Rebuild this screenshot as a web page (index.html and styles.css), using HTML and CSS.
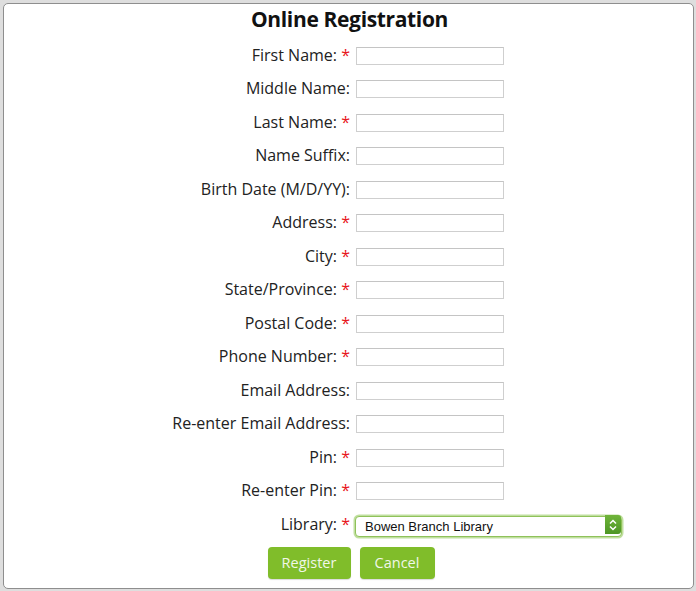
FILE: index.html
```html
<!DOCTYPE html>
<html lang="en">
<head>
<meta charset="utf-8">
<title>Online Registration</title>
<link rel="stylesheet" href="styles.css">
</head>
<body>
<div class="panel">
  <h1 class="title">Online Registration</h1>
  <form class="form">
    <label class="lbl">First Name: <span class="req">*</span></label><input class="field" type="text">
    <label class="lbl">Middle Name:</label><input class="field" type="text">
    <label class="lbl">Last Name: <span class="req">*</span></label><input class="field" type="text">
    <label class="lbl">Name Suffix:</label><input class="field" type="text">
    <label class="lbl">Birth Date (M/D/YY):</label><input class="field" type="text">
    <label class="lbl">Address: <span class="req">*</span></label><input class="field" type="text">
    <label class="lbl">City: <span class="req">*</span></label><input class="field" type="text">
    <label class="lbl">State/Province: <span class="req">*</span></label><input class="field" type="text">
    <label class="lbl">Postal Code: <span class="req">*</span></label><input class="field" type="text">
    <label class="lbl">Phone Number: <span class="req">*</span></label><input class="field" type="text">
    <label class="lbl">Email Address:</label><input class="field" type="text">
    <label class="lbl">Re-enter Email Address:</label><input class="field" type="text">
    <label class="lbl">Pin: <span class="req">*</span></label><input class="field" type="password">
    <label class="lbl">Re-enter Pin: <span class="req">*</span></label><input class="field" type="password">
    <label class="lbl">Library: <span class="req">*</span></label>
    <div class="select-wrap">
      <select class="select">
        <option>Bowen Branch Library</option>
      </select>
      <span class="arrow">
        <svg width="8" height="12" viewBox="0 0 8 12"><path d="M1 4.5 L4 1.5 L7 4.5 M1 7.5 L4 10.5 L7 7.5" fill="none" stroke="#fff" stroke-width="1.5"/></svg>
      </span>
    </div>
    <div class="actions">
      <button type="button" class="btn btn-register">Register</button>
      <button type="button" class="btn btn-cancel">Cancel</button>
    </div>
  </form>
</div>
</body>
</html>
```

FILE: styles.css
```css
html, body {
  margin: 0;
  padding: 0;
}
body {
  background: #dedede;
  width: 696px;
  height: 591px;
  overflow: hidden;
  font-family: "Open Sans", "Liberation Sans", sans-serif;
  color: #222;
}
.panel {
  margin: 3px 2px 0 3px;
  height: 584px;
  background: #fff;
  border: 1px solid #8e8e8e;
  border-radius: 5px;
}
.title {
  margin: 0;
  font-size: 21px;
  letter-spacing: -0.35px;
  line-height: 30px;
  font-weight: 700;
  text-align: center;
  color: #111;
  padding-left: 2px;
}
.form {
  display: grid;
  grid-template-columns: 346px 1fr;
  column-gap: 6px;
  grid-auto-rows: 33.5px;
  align-items: center;
  margin-top: 5px;
}
.lbl {
  text-align: right;
  font-size: 16px;
  line-height: 20px;
  white-space: nowrap;
  position: relative;
  top: -1px;
}
.req {
  color: #e8141a;
}
.field {
  width: 148px;
  height: 18px;
  box-sizing: border-box;
  border: 1px solid #cfcfcf;
  border-top-color: #c4c4c4;
  margin: 0;
  padding: 0 3px;
  background: #fff;
}
.select-wrap {
  position: relative;
  width: 267px;
  height: 21px;
  margin-left: -1px;
}
.select {
  appearance: none;
  -webkit-appearance: none;
  width: 100%;
  height: 100%;
  box-sizing: border-box;
  border: 1px solid #8fc25a;
  border-radius: 4px;
  box-shadow: 0 0 0 1.5px rgba(140, 196, 80, 0.55);
  background: #fff;
  font-family: "Liberation Sans", Arial, sans-serif;
  font-size: 13px;
  color: #111;
  padding: 0 0 0 9px;
  margin: 0;
}
.arrow {
  position: absolute;
  right: 1px;
  top: 1px;
  width: 16px;
  height: 19px;
  border-radius: 0 3px 3px 0;
  background: linear-gradient(#6fb43a, #4d9624);
  display: flex;
  align-items: center;
  justify-content: center;
}
.actions {
  grid-column: 1 / span 2;
  display: flex;
  justify-content: center;
  gap: 9px;
  padding-left: 5px;
  margin-top: 5px;
  align-self: start;
}
.btn {
  height: 32px;
  border: none;
  border-radius: 4px;
  background: #80bd2a;
  color: #f1f7e8;
  font-family: "Open Sans", sans-serif;
  font-size: 14.5px;
  padding: 0;
  box-shadow: 0 1px 1px rgba(0,0,0,0.15);
}
.btn-register {
  width: 83px;
}
.btn-cancel {
  width: 75px;
}
```
